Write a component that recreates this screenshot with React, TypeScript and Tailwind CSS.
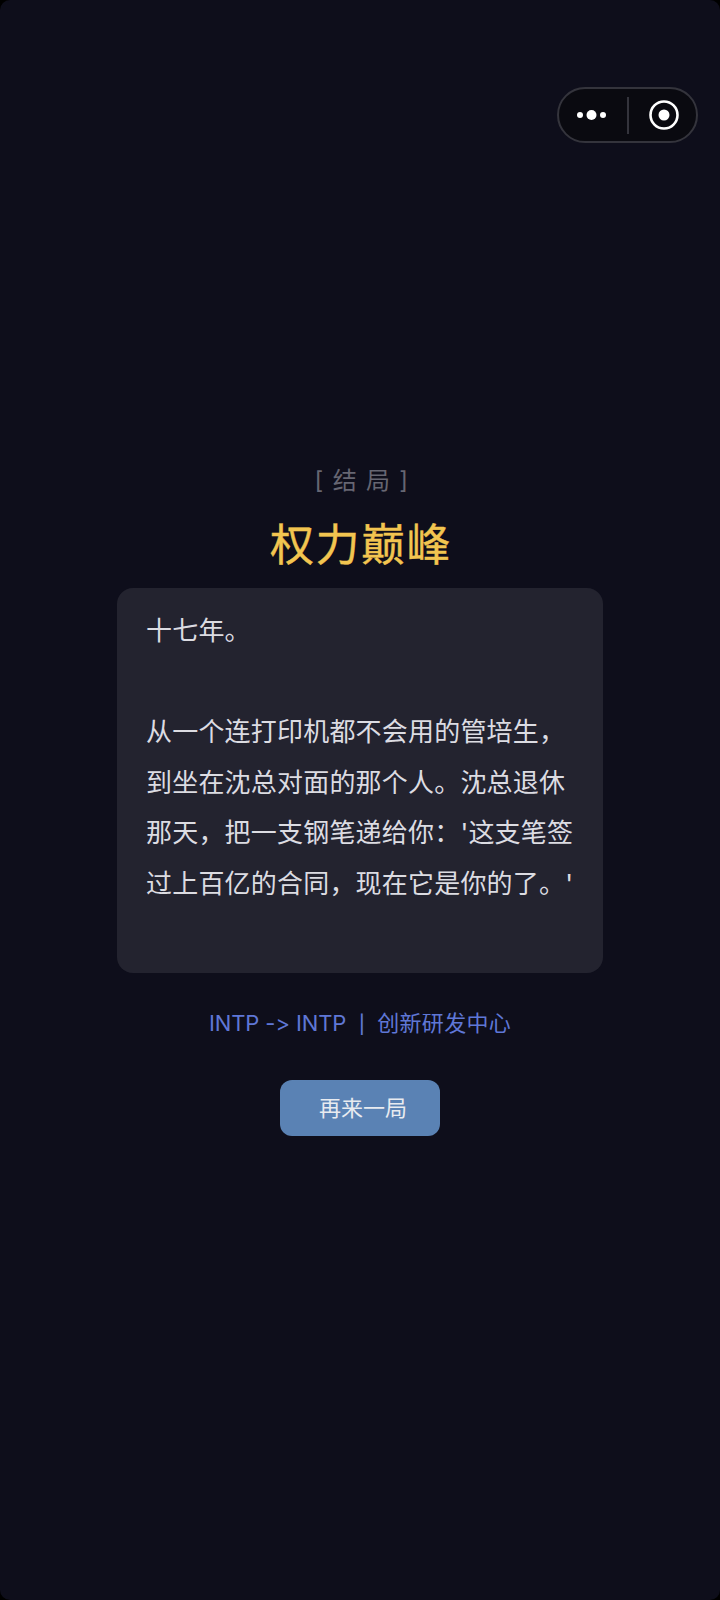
const FONT = "font-['Inter','Noto_Sans_CJK_SC',sans-serif]"

function CapsuleMenu() {
  return (
    <div className="absolute left-[557px] top-[87px] flex h-[56px] w-[141px] items-center rounded-full border-2 border-[#34343c] bg-[#0a0a10]">
      <div className="flex w-[68px] items-center justify-center pr-[2px]">
        <svg width="34" height="12" viewBox="0 0 34 12" fill="#ffffff">
          <circle cx="5" cy="6" r="3" />
          <circle cx="16.5" cy="6" r="5" />
          <circle cx="28" cy="6" r="3" />
        </svg>
      </div>
      <div className="h-[37px] w-0.5 bg-[#34343c]" />
      <div className="flex flex-1 items-center justify-center pl-[2px]">
        <svg width="30" height="30" viewBox="0 0 30 30" fill="none">
          <circle cx="15" cy="15" r="13.5" stroke="#ffffff" strokeWidth="2.6" />
          <circle cx="15" cy="15" r="5.5" fill="#ffffff" />
        </svg>
      </div>
    </div>
  )
}

export default function App() {
  return (
    <div className="bg-black">
      <div className={`relative flex h-[1600px] w-[720px] flex-col items-center overflow-hidden rounded-[10px] bg-[#0e0e1b] [font-variant-ligatures:none] ${FONT}`}>
        <CapsuleMenu />

        <p className="mt-[464px] ml-[4px] text-[24px] leading-[34px] tracking-[1.3px] text-[#666672]">[ 结 局 ]</p>
        <h1 className="mt-[18px] ml-[2px] text-[44px] leading-[58px] font-normal tracking-[1.5px] text-[#f2c550] [-webkit-text-stroke:0.4px_#f2c550]">
          权力巅峰
        </h1>

        <div className="mt-[14px] h-[385px] w-[486px] rounded-2xl bg-[#23232f] px-[29px] py-[18px] text-[26px] leading-[50.6px] tracking-[0.2px] text-[#dcdce2]">
          <p>十七年。</p>
          <br />
          <p>从一个连打印机都不会用的管培生，到坐在沈总对面的那个人。沈总退休那天，把一支钢笔递给你：'这支笔签过上百亿的合同，现在它是你的了。'</p>
        </div>

        <p className="mt-[33px] text-[22px] leading-[34px] text-[#5f77d6]">
          <span className="tracking-[-0.1px]">INTP -&gt; INTP</span> &nbsp;
          <span className="text-[18px] font-medium">|</span>
          &nbsp; <span className="tracking-[0.3px]">创新研发中心</span>
        </p>

        <button
          type="button"
          className="mt-[38px] h-[56px] w-[160px] rounded-xl bg-[#5a82b4] pl-[6px] text-[22px] text-[#e8ebf0]"
        >
          再来一局
        </button>
      </div>
    </div>
  )
}
